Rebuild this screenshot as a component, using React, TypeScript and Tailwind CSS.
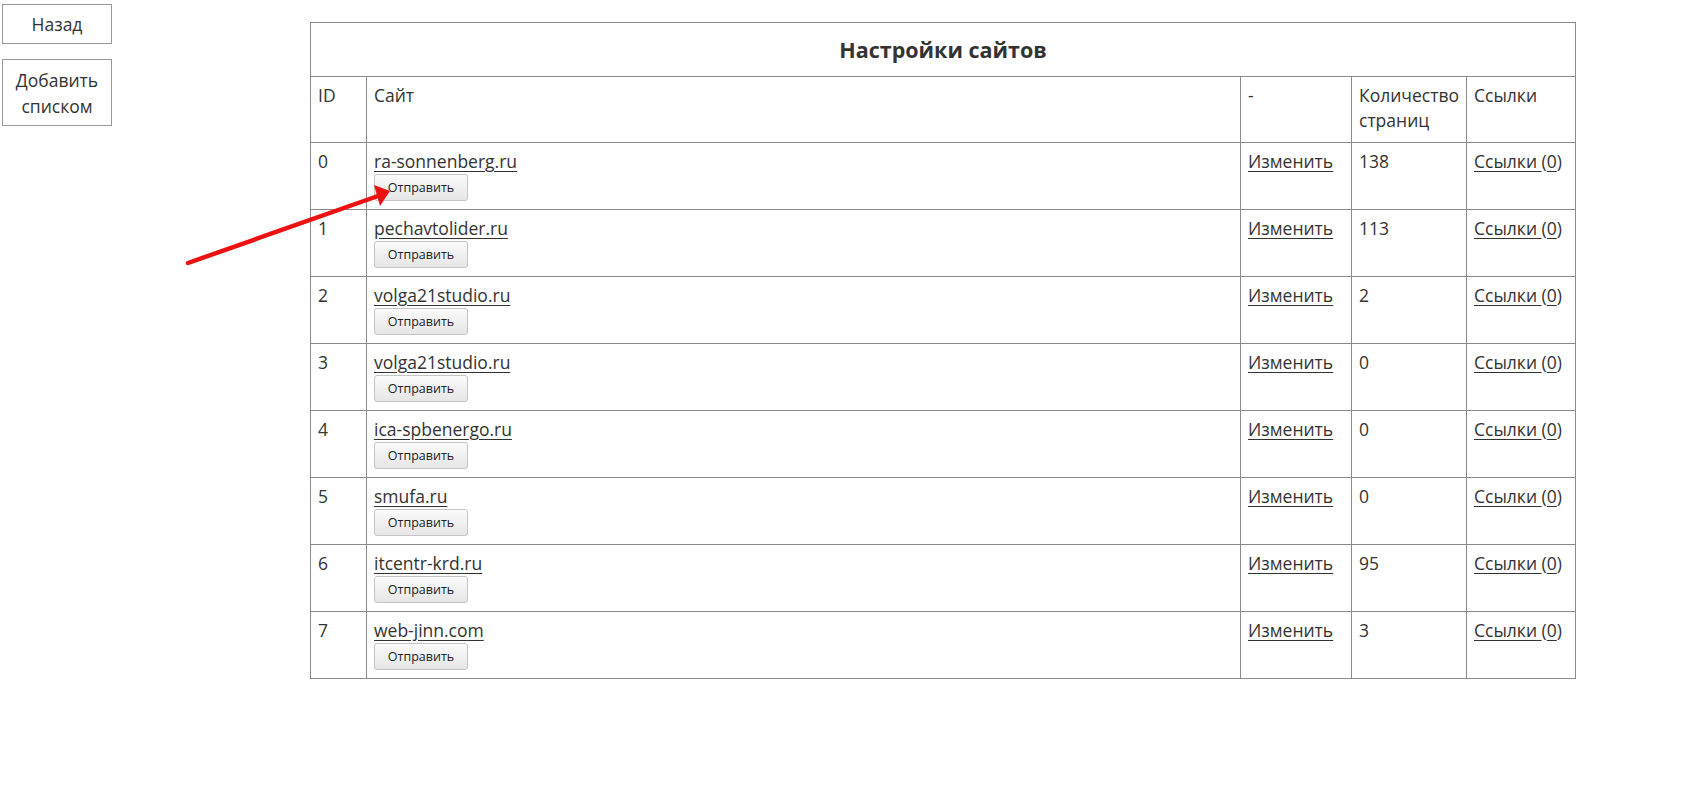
import React from "react";

const rows = [
  { id: 0, site: "ra-sonnenberg.ru", count: 138 },
  { id: 1, site: "pechavtolider.ru", count: 113 },
  { id: 2, site: "volga21studio.ru", count: 2 },
  { id: 3, site: "volga21studio.ru", count: 0 },
  { id: 4, site: "ica-spbenergo.ru", count: 0 },
  { id: 5, site: "smufa.ru", count: 0 },
  { id: 6, site: "itcentr-krd.ru", count: 95 },
  { id: 7, site: "web-jinn.com", count: 3 },
];

const cell = "border border-[#8a8a8a] px-[7px] pt-[6px] pb-[7px] align-top text-left font-normal";

export default function App() {
  return (
    <div
      className="relative min-h-[787px] bg-white text-[#333] text-[17.5px] leading-[25px]"
      style={{ fontFamily: '"Open Sans", "Noto Sans", sans-serif' }}
    >
      <div className="flex">
        <div className="w-[310px] shrink-0 pl-[2px] pt-[4px] flex flex-col gap-[15px]">
          <button className="w-[110px] h-[40px] border border-[#999] bg-white text-[17.5px] text-[#333]">
            Назад
          </button>
          <button className="w-[110px] h-[67px] border border-[#999] bg-white text-[17.5px] leading-[26px] text-[#333]">
            Добавить
            <br />
            списком
          </button>
        </div>
        <table className="mt-[22px] w-[1265px] border-collapse border border-[#8a8a8a] table-fixed">
          <colgroup>
            <col className="w-[56px]" />
            <col className="w-[874px]" />
            <col className="w-[111px]" />
            <col className="w-[115px]" />
            <col className="w-[109px]" />
          </colgroup>
          <thead>
            <tr>
              <th colSpan={5} className="border border-[#8a8a8a] h-[54px] text-center text-[21.5px] font-bold text-[#333] align-middle">
                Настройки сайтов
              </th>
            </tr>
            <tr className="h-[66px]">
              <th className={cell}>ID</th>
              <th className={cell}>Сайт</th>
              <th className={cell}>-</th>
              <th className={cell}>
                Количество
                <br />
                страниц
              </th>
              <th className={cell}>Ссылки</th>
            </tr>
          </thead>
          <tbody>
            {rows.map((r) => (
              <tr key={r.id} className="h-[67px]">
                <td className={cell}>{r.id}</td>
                <td className={cell}>
                  <div>
                    <span className="underline underline-offset-[3px]">{r.site}</span>
                  </div>
                  <button className="block w-[94px] h-[27px] rounded-[3px] border border-[#c4c4c4] bg-gradient-to-b from-[#fbfbfb] to-[#e6e6e6] text-[12.5px] leading-[20px] text-[#222]">
                    Отправить
                  </button>
                </td>
                <td className={cell}>
                  <span className="underline underline-offset-[3px]">Изменить</span>
                </td>
                <td className={cell}>{r.count}</td>
                <td className={cell + " whitespace-nowrap"}>
                  <span className="underline underline-offset-[3px]">Ссылки </span>(
                  <span className="underline underline-offset-[3px]">0</span>)
                </td>
              </tr>
            ))}
          </tbody>
        </table>
      </div>
      <svg className="absolute left-0 top-0 pointer-events-none" width="1693" height="787">
        <line x1="188" y1="263" x2="378" y2="196" stroke="#ee1111" strokeWidth="4.5" strokeLinecap="round" />
        <polygon points="390,191 374,185 380,206" fill="#ee1111" />
      </svg>
    </div>
  );
}
